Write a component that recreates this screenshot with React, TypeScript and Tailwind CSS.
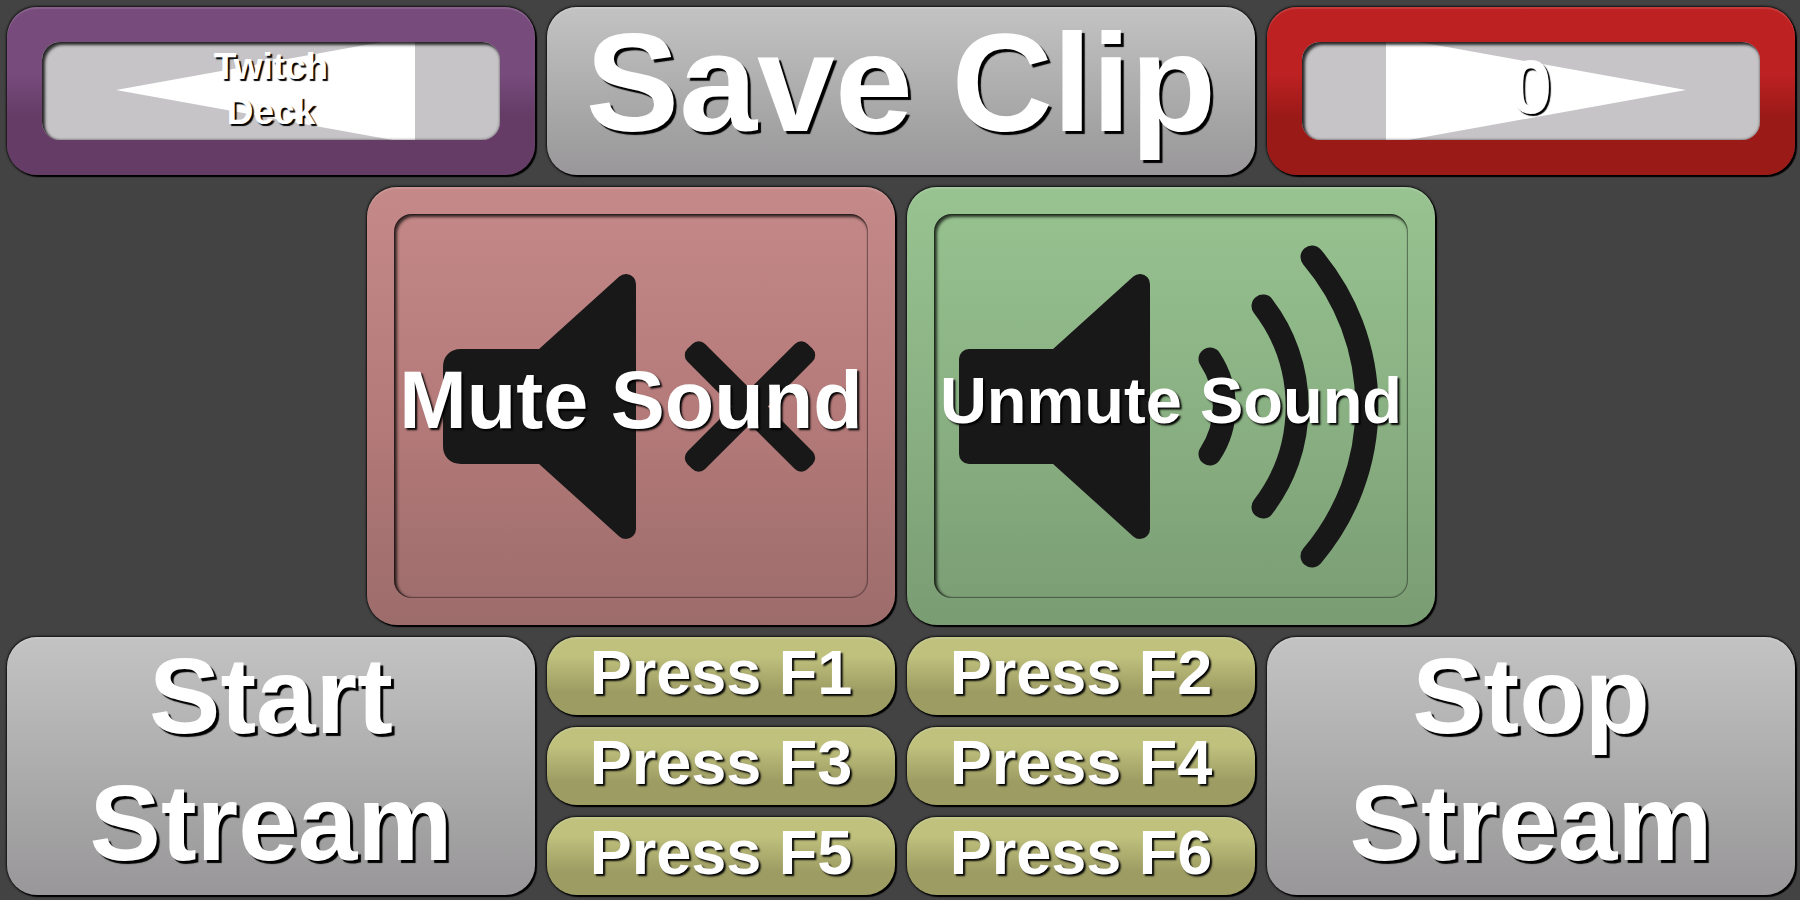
import type { ReactNode } from "react";
import clsx from "clsx";

const tones = {
  gray: "from-[#c3c3c3] via-[#adadad] to-[#999799]",
  red: "from-[#c48988] via-[#b57b7a] to-[#9c6c6b]",
  green: "from-[#98c491] via-[#8ab183] to-[#7a9c73]",
  olive: "from-[#bfc17d] from-25% to-[#9d9c63] to-70%",
  purple: "from-[#774b7c] from-40% to-[#643c66] to-65%",
  crimson: "from-[#be2122] from-40% to-[#9a1a18] to-65%",
};

type TileProps = {
  tone: keyof typeof tones;
  className?: string;
  art?: ReactNode;
  children: ReactNode;
};

function Tile({ tone, className, art, children }: TileProps) {
  return (
    <button
      type="button"
      className={clsx(
        "relative flex min-h-0 min-w-0 cursor-pointer items-center justify-center rounded-[30px] bg-linear-to-b text-center font-bold whitespace-nowrap text-white",
        "shadow-[2px_2px_1px_#000,0_0_2px_1px_#111,inset_0_2px_1px_rgba(255,255,255,0.12)]",
        tones[tone],
        className,
      )}
    >
      {art}
      <span className="relative">{children}</span>
    </button>
  );
}

function ArrowArt({ points }: { points: string }) {
  return (
    <span className="absolute inset-[35px] overflow-hidden rounded-[18px] bg-[#c6c4c7]">
      <svg viewBox="0 0 458 98" preserveAspectRatio="none" className="h-full w-full">
        <polygon points={points} fill="#fff" />
      </svg>
      <span className="absolute inset-0 rounded-[18px] shadow-[inset_3px_3px_3px_rgba(0,0,0,0.75),inset_0_0_3px_rgba(0,0,0,0.6)]" />
    </span>
  );
}

function SoundArt({ children }: { children: ReactNode }) {
  return (
    <>
      <span className="absolute inset-[27px] rounded-[18px] shadow-[inset_2px_2px_3px_1px_rgba(0,0,0,0.7),inset_0_0_1px_1px_rgba(0,0,0,0.35)]" />
      <svg viewBox="0 0 528 438" className="absolute inset-0 h-full w-full" fill="#181818" stroke="#181818">
        {children}
      </svg>
    </>
  );
}

const keys = ["F1", "F2", "F3", "F4", "F5", "F6"];

export default function App() {
  return (
    <main className="grid h-screen grid-cols-10 grid-rows-10 gap-3 bg-[#434343] pt-[7px] pr-[5px] pb-[5px] pl-[7px] font-['Liberation_Sans',Arial,sans-serif]">
      <Tile
        tone="purple"
        className="col-span-3 row-span-2 pb-1 text-[37px] leading-[45px] [text-shadow:2px_2px_1px_#000]"
        art={<ArrowArt points="74,48 373,-6 373,102" />}
      >
        Twitch
        <br />
        Deck
      </Tile>
      <Tile
        tone="gray"
        className="col-span-4 row-span-2 pb-4 text-[140px] leading-none [text-shadow:3px_3px_1px_#000]"
      >
        Save Clip
      </Tile>
      <Tile
        tone="crimson"
        className="col-span-3 row-span-2 pb-2 text-[76px] leading-none [text-shadow:2px_2px_1px_#000]"
        art={<ArrowArt points="384,48 84,-6 84,102" />}
      >
        0
      </Tile>

      <Tile
        tone="red"
        className="col-span-3 col-start-3 row-span-5 pb-3 text-[81px] leading-none [text-shadow:2px_2px_2px_#000]"
        art={
          <SoundArt>
            <path
              d="M86 180Q86 172 94 172H176L259 97V342L176 267H94Q86 267 86 259Z"
              strokeWidth="20"
              strokeLinejoin="round"
            />
            <g stroke="none">
              <rect x="298" y="207" width="170" height="25" rx="9" transform="rotate(45 383 219.5)" />
              <rect x="298" y="207" width="170" height="25" rx="9" transform="rotate(-45 383 219.5)" />
            </g>
          </SoundArt>
        }
      >
        Mute Sound
      </Tile>
      <Tile
        tone="green"
        className="col-span-3 row-span-5 pb-3 text-[65px] leading-none [text-shadow:2px_2px_2px_#000]"
        art={
          <SoundArt>
            <path d="M62 172H150L233 97V342L150 267H62Z" strokeWidth="20" strokeLinejoin="round" />
            <g fill="none" strokeWidth="23" strokeLinecap="round">
              <path d="M303 172A86 86 0 0 1 303 267" />
              <path d="M356 119A165 165 0 0 1 356 320" />
              <path d="M405 70A231 231 0 0 1 405 369" />
            </g>
          </SoundArt>
        }
      >
        Unmute Sound
      </Tile>

      <Tile
        tone="gray"
        className="col-span-3 col-start-1 row-span-3 pb-3 text-[107px] leading-[127px] [text-shadow:3px_3px_1px_#000]"
      >
        Start
        <br />
        Stream
      </Tile>
      <div className="col-span-4 row-span-3 grid grid-cols-2 grid-rows-3 gap-3">
        {keys.map((key) => (
          <Tile key={key} tone="olive" className="pb-2 text-[63px] leading-none [text-shadow:2px_2px_2px_#000]">
            Press {key}
          </Tile>
        ))}
      </div>
      <Tile
        tone="gray"
        className="col-span-3 row-span-3 pb-3 text-[107px] leading-[127px] [text-shadow:3px_3px_1px_#000]"
      >
        Stop
        <br />
        Stream
      </Tile>
    </main>
  );
}
